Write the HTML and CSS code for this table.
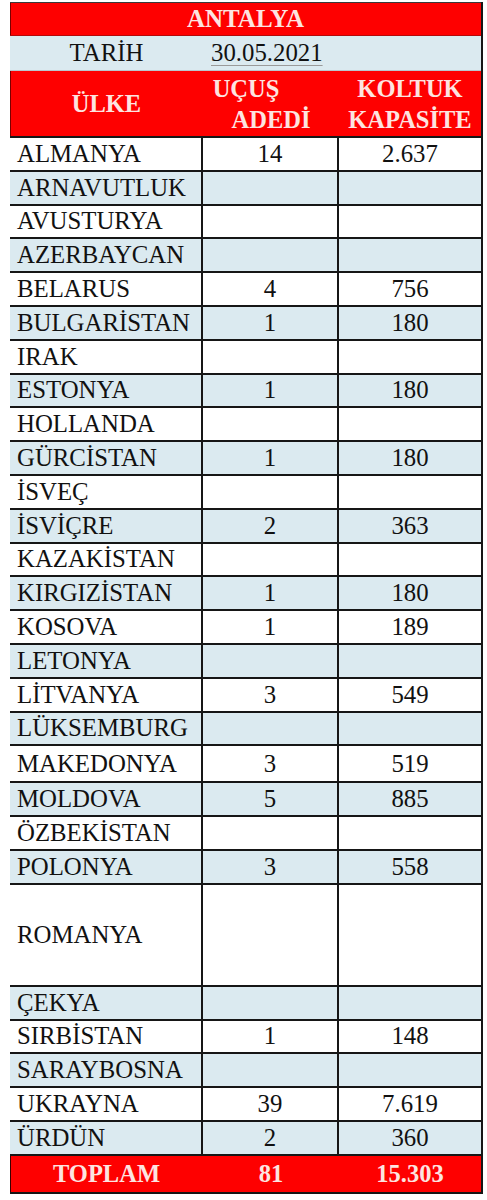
FILE: index.html
```html
<!DOCTYPE html>
<html lang="tr">
<head>
<meta charset="utf-8">
<title>Antalya</title>
<link rel="stylesheet" href="styles.css">
</head>
<body>
<div class="sheet">
  <div class="title">ANTALYA</div>
  <div class="row date-row">
    <div class="cell center">TARİH</div>
    <div class="cell date-cell"><span class="date">30.05.2021</span></div>
  </div>
  <div class="row head">
    <div class="cell center">ÜLKE</div>
    <div class="cell stack"><span class="shift">UÇUŞ</span><span>ADEDİ</span></div>
    <div class="cell stack"><span>KOLTUK</span><span>KAPASİTE</span></div>
  </div>

  <div class="row data"><div class="cell name">ALMANYA</div><div class="cell num">14</div><div class="cell num">2.637</div></div>
  <div class="row data alt"><div class="cell name">ARNAVUTLUK</div><div class="cell num"></div><div class="cell num"></div></div>
  <div class="row data"><div class="cell name">AVUSTURYA</div><div class="cell num"></div><div class="cell num"></div></div>
  <div class="row data alt"><div class="cell name">AZERBAYCAN</div><div class="cell num"></div><div class="cell num"></div></div>
  <div class="row data"><div class="cell name">BELARUS</div><div class="cell num">4</div><div class="cell num">756</div></div>
  <div class="row data alt"><div class="cell name">BULGARİSTAN</div><div class="cell num">1</div><div class="cell num">180</div></div>
  <div class="row data"><div class="cell name">IRAK</div><div class="cell num"></div><div class="cell num"></div></div>
  <div class="row data alt"><div class="cell name">ESTONYA</div><div class="cell num">1</div><div class="cell num">180</div></div>
  <div class="row data"><div class="cell name">HOLLANDA</div><div class="cell num"></div><div class="cell num"></div></div>
  <div class="row data alt"><div class="cell name">GÜRCİSTAN</div><div class="cell num">1</div><div class="cell num">180</div></div>
  <div class="row data"><div class="cell name">İSVEÇ</div><div class="cell num"></div><div class="cell num"></div></div>
  <div class="row data alt"><div class="cell name">İSVİÇRE</div><div class="cell num">2</div><div class="cell num">363</div></div>
  <div class="row data"><div class="cell name">KAZAKİSTAN</div><div class="cell num"></div><div class="cell num"></div></div>
  <div class="row data alt"><div class="cell name">KIRGIZİSTAN</div><div class="cell num">1</div><div class="cell num">180</div></div>
  <div class="row data"><div class="cell name">KOSOVA</div><div class="cell num">1</div><div class="cell num">189</div></div>
  <div class="row data alt"><div class="cell name">LETONYA</div><div class="cell num"></div><div class="cell num"></div></div>
  <div class="row data"><div class="cell name">LİTVANYA</div><div class="cell num">3</div><div class="cell num">549</div></div>
  <div class="row data alt"><div class="cell name">LÜKSEMBURG</div><div class="cell num"></div><div class="cell num"></div></div>
  <div class="row data tall"><div class="cell name">MAKEDONYA</div><div class="cell num">3</div><div class="cell num">519</div></div>
  <div class="row data alt"><div class="cell name">MOLDOVA</div><div class="cell num">5</div><div class="cell num">885</div></div>
  <div class="row data"><div class="cell name">ÖZBEKİSTAN</div><div class="cell num"></div><div class="cell num"></div></div>
  <div class="row data alt"><div class="cell name">POLONYA</div><div class="cell num">3</div><div class="cell num">558</div></div>
  <div class="row data huge"><div class="cell name">ROMANYA</div><div class="cell num"></div><div class="cell num"></div></div>
  <div class="row data alt"><div class="cell name">ÇEKYA</div><div class="cell num"></div><div class="cell num"></div></div>
  <div class="row data"><div class="cell name">SIRBİSTAN</div><div class="cell num">1</div><div class="cell num">148</div></div>
  <div class="row data alt"><div class="cell name">SARAYBOSNA</div><div class="cell num"></div><div class="cell num"></div></div>
  <div class="row data"><div class="cell name">UKRAYNA</div><div class="cell num">39</div><div class="cell num">7.619</div></div>
  <div class="row data alt"><div class="cell name">ÜRDÜN</div><div class="cell num">2</div><div class="cell num">360</div></div>

  <div class="row total">
    <div class="cell center">TOPLAM</div>
    <div class="cell center">81</div>
    <div class="cell center">15.303</div>
  </div>
</div>
</body>
</html>
```

FILE: styles.css
```css
* {
  box-sizing: border-box;
}

body {
  margin: 0;
  background: #ffffff;
  font-family: "Liberation Serif", "Times New Roman", serif;
  font-size: 24.8px;
  color: #111111;
}

.sheet {
  margin: 2px 0 0 10px;
  width: 473px;
  border-right: 2px solid #161616;
}

.title {
  height: 34px;
  background: #fe0000;
  border-top: 1px solid #3a3a3a;
  border-bottom: 1px solid #b40a0a;
  box-shadow: inset 1px 0 0 #7a0000;
  color: #fde4e0;
  font-weight: bold;
  font-size: 25px;
  line-height: 32px;
  text-align: center;
}

.row {
  display: grid;
  grid-template-columns: 193px 136px 142px;
}

.cell {
  display: flex;
  align-items: center;
  min-width: 0;
}

.center {
  justify-content: center;
}

.date-row {
  height: 35px;
  background: #dbeaf0;
  border-bottom: 1px solid #b9c6cc;
}

.date-cell {
  grid-column: 2 / 4;
  padding-left: 8px;
}

.date {
  text-decoration: underline;
  text-decoration-color: #9a9a9a;
  text-decoration-thickness: 1px;
  text-underline-offset: 4px;
}

.head {
  height: 67px;
  background: #fe0000;
  border-bottom: 2px solid #161616;
  box-shadow: inset 1px 0 0 #7a0000;
  color: #fde4e0;
  font-weight: bold;
  font-size: 24.5px;
}

.stack {
  flex-direction: column;
  justify-content: center;
  line-height: 31px;
}

.shift {
  padding-right: 50px;
}

.data {
  height: 33.8px;
  background: #ffffff;
  border-bottom: 2px solid #161616;
}

.data.alt {
  background: #dbeaf0;
}

.data.tall {
  height: 37px;
}

.data.huge {
  height: 102px;
}

.data .cell:not(:last-child) {
  border-right: 2px solid #161616;
}

.name {
  padding-left: 7px;
  white-space: nowrap;
}

.num {
  justify-content: center;
}

.total {
  height: 38px;
  background: #fe0000;
  border-bottom: 2px solid #161616;
  box-shadow: inset 1px 0 0 #3a0000;
  color: #fde4e0;
  font-weight: bold;
  font-size: 24.5px;
}
```
